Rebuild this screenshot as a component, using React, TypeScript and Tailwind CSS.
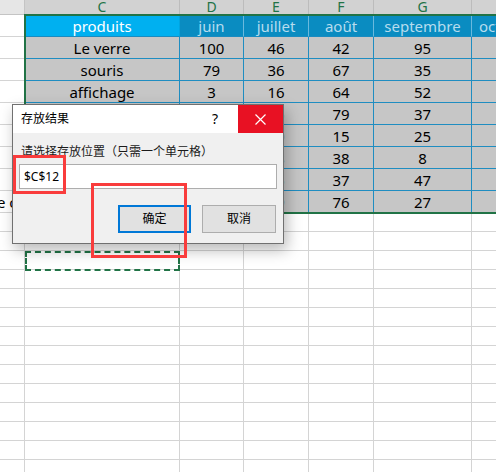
import React from 'react';

const W = ['w-[25px]', 'w-[155px]', 'w-[64px]', 'w-[65px]', 'w-[65px]', 'w-[98px]', 'w-[65px]'];
const LETTERS = ['C', 'D', 'E', 'F', 'G', 'H'];
const HEAD = ['produits', 'juin', 'juillet', 'août', 'septembre', 'octobre'];
const ROWS = [
  ['Le verre', '100', '46', '42', '95', ''],
  ['souris', '79', '36', '67', '35', ''],
  ['affichage', '3', '16', '64', '52', ''],
  ['clavier', '12', '75', '79', '37', ''],
  ['écran', '48', '30', '15', '25', ''],
  ['câble', '21', '28', '38', '8', ''],
  ['tapis', '9', '45', '37', '47', ''],
  ['casque', '54', '59', '76', '27', ''],
];

export default function App() {
  return (
    <div className="relative w-[496px] h-[472px] overflow-hidden bg-white font-['Noto_Sans','Noto_Sans_CJK_SC',sans-serif]">
      {/* column letters */}
      <div className="flex h-[15px]">
        <div className="w-[25px] shrink-0 bg-[#e6e6e6] border-r border-b border-[#c4c4c4]" />
        {LETTERS.map((l, i) => (
          <div
            key={l}
            className={`${W[i + 1]} shrink-0 bg-[#d2d2d2] border-r border-[#bcbcbc] flex items-start justify-center text-[14px] leading-[14px] text-[#217346]`}
          >
            {l}
          </div>
        ))}
      </div>

      {/* table header row */}
      <div className="flex h-[22px]">
        <div className="w-[25px] shrink-0 bg-white border-r border-b border-[#d4d4d4]" />
        {HEAD.map((h, i) => (
          <div
            key={h}
            className={`${W[i + 1]} shrink-0 border-b border-[#1a8bc0] flex items-center justify-center text-[15px] leading-[20px] whitespace-nowrap overflow-hidden ${
              i === 0
                ? 'bg-[#00b0f0] text-white border-r border-r-[#00a4e0]'
                : 'bg-[#0a8cc1] text-[#b6dcee] border-r border-r-[#6ab9dd]'
            } ${i === 5 ? 'justify-start pl-[7px]' : ''}`}
          >
            {h}
          </div>
        ))}
      </div>

      {/* data rows */}
      {ROWS.map((r, ri) => (
        <div key={ri} className="flex h-[22px]">
          <div className="w-[25px] shrink-0 bg-white border-r border-b border-[#d4d4d4] flex items-center text-[15px] leading-[20px] whitespace-nowrap text-black">
            {ri === 7 ? <span className="-ml-[3px]">e c</span> : null}
          </div>
          {r.map((c, ci) => (
            <div
              key={ci}
              className={`${W[ci + 1]} shrink-0 bg-[#c6c6c6] border-r border-b border-[#1f8dc1] flex items-center justify-center text-[15px] leading-[20px] text-black whitespace-nowrap`}
            >
              {c}
            </div>
          ))}
        </div>
      ))}

      {/* empty rows */}
      {Array.from({ length: 14 }).map((_, ri) => (
        <div key={'e' + ri} className="flex h-[19px]">
          {W.map((w, ci) => (
            <div key={ci} className={`${w} shrink-0 bg-white border-r border-b border-[#d4d4d4]`} />
          ))}
        </div>
      ))}

      {/* selection border */}
      <div className="absolute left-[24px] top-[14px] w-[500px] h-[200px] border-2 border-[#217346] pointer-events-none" />

      {/* marching ants on C12 */}
      <div className="absolute left-[25px] top-[251px] w-[155px] h-[20px] border-2 border-dashed border-[#217346]" />

      {/* dialog */}
      <div className="absolute left-[12px] top-[104px] w-[272px] h-[140px] border border-[#707070] bg-[#f0f0f0] flex flex-col shadow-[3px_6px_14px_rgba(0,0,0,0.28)] font-['Noto_Sans','Noto_Sans_CJK_SC',sans-serif]">
        <div className="h-[28px] bg-white flex items-center shrink-0">
          <div className="flex-1 pl-[8px] text-[12px] leading-[16px] text-black">存放结果</div>
          <div className="w-[46px] flex items-center justify-center text-[14px] leading-[16px] text-black">?</div>
          <div className="w-[45px] h-full bg-[#e81123] flex items-center justify-center">
            <svg width="11" height="11" viewBox="0 0 11 11">
              <path d="M0.5 0.5 L10.5 10.5 M10.5 0.5 L0.5 10.5" stroke="white" strokeWidth="1.2" fill="none" />
            </svg>
          </div>
        </div>
        <div className="flex-1 flex flex-col px-[6px] pt-[11px]">
          <div className="pl-[2px] h-[16px] flex items-center text-[12px] leading-[16px] text-[#1a1a1a] whitespace-nowrap">
            请选择存放位置（只需一个单元格）
          </div>
          <div className="mt-[4px] h-[25px] bg-white border border-[#adadad] flex items-center px-[4px] text-[12px] leading-[16px] text-black">
            $C$12
          </div>
          <div className="mt-[16px] flex justify-end gap-[11px] pr-[1px]">
            <div className="w-[73px] h-[28px] bg-[#e1e1e1] border-2 border-[#0078d7] flex items-center justify-center text-[12px] leading-[16px] text-black">
              确定
            </div>
            <div className="w-[74px] h-[28px] bg-[#e1e1e1] border border-[#adadad] flex items-center justify-center text-[12px] leading-[16px] text-black">
              取消
            </div>
          </div>
        </div>
      </div>

      {/* red annotation boxes */}
      <div className="absolute left-[13px] top-[155px] w-[53px] h-[39px] border-[3px] border-[#f93c3c]" />
      <div className="absolute left-[91px] top-[183px] w-[96px] h-[75px] border-[3px] border-[#f93c3c]" />
    </div>
  );
}
